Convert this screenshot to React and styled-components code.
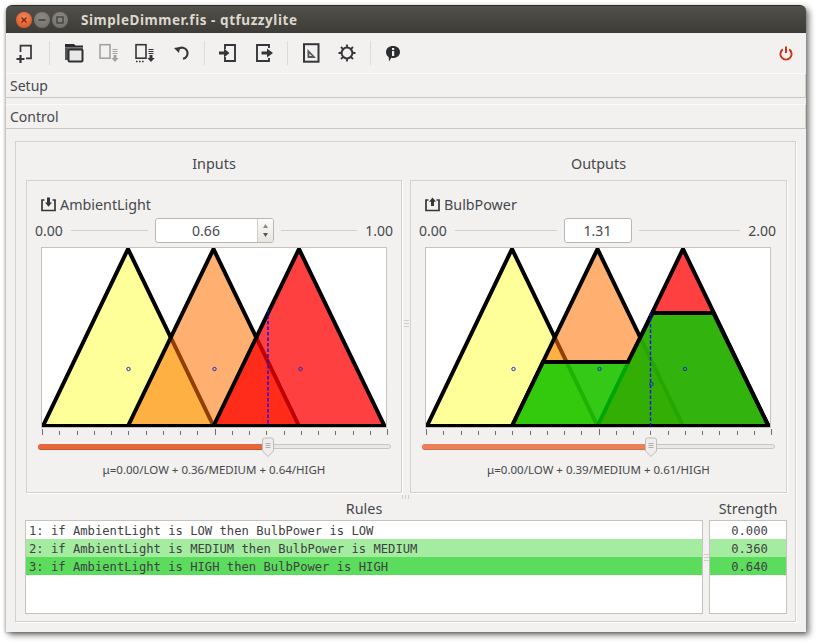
import React from 'react';
import styled, { createGlobalStyle } from 'styled-components';

const Global = createGlobalStyle`
  html, body { margin: 0; padding: 0; background: #fff; }
  #root { width: 816px; height: 643px; overflow: hidden; }
`;

const Page = styled.div`
  padding: 5px 10px 0 6px;
  font-family: "Noto Sans", sans-serif;
  font-size: 14px;
  color: #46484c;
`;

const Window = styled.div`
  width: 800px;
  height: 627px;
  box-sizing: border-box;
  background: #f2f1ef;
  border-radius: 6px 6px 0 0;
  box-shadow: 3px 3px 6px rgba(0, 0, 0, 0.55), -1px 1px 3px rgba(0, 0, 0, 0.25);
  display: flex;
  flex-direction: column;
`;

const TitleBar = styled.div`
  height: 28px;
  flex: none;
  border-radius: 6px 6px 0 0;
  background: linear-gradient(#52504a, #3c3b37);
  border-top: 1px solid #2f2e2b;
  box-sizing: border-box;
  display: flex;
  align-items: center;
  padding-left: 10px;
`;

const WinButton = styled.span`
  width: 16px;
  height: 16px;
  margin-right: 2px;
  border-radius: 50%;
  background: ${p => (p.$close ? 'radial-gradient(circle at 50% 35%, #f58a5a, #d8491f)' : 'radial-gradient(circle at 50% 35%, #8d8b83, #6c6a63)')};
  color: ${p => (p.$close ? '#6e2410' : '#3f3e3a')};
  display: flex;
  align-items: center;
  justify-content: center;
  flex: none;
`;

const TitleText = styled.span`
  margin-left: 11px;
  font-weight: 700;
  font-size: 13.5px;
  letter-spacing: 0.55px;
  color: #dcd8cd;
`;

const Toolbar = styled.div`
  height: 40px;
  flex: none;
  display: flex;
  align-items: center;
  padding: 0 2px 0 1px;
`;

const ToolButton = styled.span`
  width: 36px;
  height: 24px;
  flex: none;
  display: flex;
  justify-content: center;
`;

const ToolSep = styled.span`
  width: ${p => p.$w}px;
  height: 24px;
  flex: none;
  display: flex;
  justify-content: center;
  &::before { content: ''; width: 1px; background: #dcdbd8; }
`;

const Spacer = styled.span`flex: 1;`;

const Section = styled.div`
  height: 25px;
  flex: none;
  box-sizing: border-box;
  margin-top: ${p => p.$top}px;
  padding-left: 4px;
  border-top: 1px solid #fbfafa;
  border-bottom: 1px solid #c9c8c5;
  border-right: 1px solid #d0cfcc;
  line-height: 24px;
  font-size: 14px;
`;

const Frame = styled.div`
  margin: 12px 10px 0 9px;
  height: 481px;
  box-sizing: border-box;
  border: 1px solid #d2d1ce;
  box-shadow: 1px 1px 0 #fff;
  padding: 12px 8px 8px 10px;
  display: flex;
  flex-direction: column;
`;

const Columns = styled.div`
  display: grid;
  grid-template-columns: 376px 8px 377px;
  height: 339px;
  flex: none;
`;

const Column = styled.div`
  display: flex;
  flex-direction: column;
`;

const Heading = styled.div`
  height: ${p => p.$h}px;
  line-height: ${p => p.$h}px;
  flex: none;
  text-align: center;
  font-size: 14.4px;
`;

const GroupBox = styled.div`
  margin-top: 6px;
  height: 313px;
  box-sizing: border-box;
  border: 1px solid #d2d1ce;
  box-shadow: 1px 1px 0 #fff;
  padding: 12px ${p => p.$pr}px 0 8px;
`;

const VarHeader = styled.div`
  height: 22px;
  margin-bottom: 3px;
  padding-left: 6px;
  display: flex;
  align-items: center;
  gap: 4px;
  font-size: 14.3px;
`;

const ValueRow = styled.div`
  height: 25px;
  margin-bottom: 4px;
  display: flex;
  align-items: center;
  gap: 7px;
`;

const Bound = styled.span`
  font-size: 14px;
  width: 29px;
  flex: none;
  text-align: ${p => p.$align};
`;

const Rule = styled.span`
  flex: 1;
  height: 1px;
  background: #cfcecb;
`;

const SpinBox = styled.div`
  width: ${p => p.$w}px;
  height: 25px;
  flex: none;
  box-sizing: border-box;
  background: #fff;
  border: 1px solid #b8b7b3;
  border-radius: 3px;
  display: flex;
`;

const SpinValue = styled.span`
  flex: 1;
  text-align: center;
  line-height: 23px;
  font-size: 14px;
`;

const SpinArrows = styled.span`
  width: 15px;
  flex: none;
  border-left: 1px solid #cfcecb;
  border-radius: 0 2px 2px 0;
  background: linear-gradient(#fbfbfa, #e6e5e2);
  display: flex;
  flex-direction: column;
  align-items: center;
  justify-content: center;
  gap: 5px;
`;

const PlotFrame = styled.div`
  margin-left: 6px;
  width: 346px;
  height: 181px;
  box-sizing: border-box;
  border: 1px solid #c4c3c0;
  background: #fff;
  svg { display: block; }
`;

const SliderBox = styled.div`
  margin-left: 3px;
  width: 353px;
  height: 30px;
  position: relative;
  svg.ticks { display: block; }
`;

const Track = styled.div`
  position: absolute;
  left: 0;
  right: 0;
  top: 16px;
  height: 5px;
  box-sizing: border-box;
  border-radius: 3px;
  background: #e9e8e6;
  border: 1px solid #c6c5c2;
`;

const TrackFill = styled.div`
  position: absolute;
  left: 0;
  top: 16px;
  height: 6px;
  border-radius: 3px 0 0 3px;
  background: ${p => p.$c};
  border-bottom: 1px solid ${p => p.$b};
  box-sizing: border-box;
`;

const Thumb = styled.svg`
  position: absolute;
  top: 9px;
`;

const Mu = styled.div`
  margin-top: 2px;
  height: 20px;
  line-height: 20px;
  text-align: center;
  font-size: 11.5px;
  padding-left: ${p => p.$pad}px;
`;

const VGrip = styled.div`
  display: flex;
  align-items: center;
  justify-content: center;
  &::before {
    content: '';
    width: 5px;
    height: 7px;
    background: repeating-linear-gradient(#d0cfcc 0 1px, transparent 1px 3px);
  }
`;

const HGrip = styled.div`
  height: 7px;
  flex: none;
  display: flex;
  align-items: center;
  justify-content: center;
  padding-right: 1px;
  &::before {
    content: '';
    width: 8px;
    height: 4px;
    background: repeating-linear-gradient(90deg, #d0cfcc 0 1px, transparent 1px 3px);
  }
`;

const RulesArea = styled.div`
  display: grid;
  grid-template-columns: 678px 6px 78px;
  margin-left: -1px;
  flex: none;
`;

const ListBox = styled.div`
  margin-top: 2px;
  height: 94px;
  box-sizing: border-box;
  border: 1px solid #c4c3c0;
  background: #fff;
  overflow: hidden;
`;

const ListRow = styled.div`
  height: 18px;
  line-height: 20px;
  padding-left: 3px;
  font-family: "DejaVu Sans Mono", monospace;
  font-size: 12.18px;
  white-space: pre;
  background: ${p => p.$bg};
  text-align: ${p => (p.$center ? 'center' : 'left')};
  color: #3f4144;
`;

const Ic = ({ children }) => (
  <svg width="24" height="24" viewBox="0 0 24 24" fill="none">{children}</svg>
);

const DK = '#35363a';
const GR = '#a3a3a1';

const IconNew = () => (
  <Ic>
    <path d="M7.500 11V4.700H18V17.300H13" stroke={DK} strokeWidth="1.700" />
    <path d="M7.500 14V22M3.500 18H11.500" stroke={DK} strokeWidth="2.200" />
  </Ic>
);
const IconOpen = () => (
  <Ic>
    <path d="M4 3h9l1.500 1.500H22V7H4z" fill="#2b2b2d" />
    <path d="M4 6h18v3H4z" fill="#77777a" />
    <path d="M4 7h3v12H4z" fill="#55565a" />
    <rect x="7.500" y="8.500" width="14" height="12" rx="1" fill="#e8e8e6" stroke="#2f3033" strokeWidth="2" />
  </Ic>
);
const IconSave = ({ c, dots }) => (
  <Ic>
    <rect x="3" y="3.700" width="10" height="13.500" stroke={c} strokeWidth="1.600" />
    <path d="M15.500 8.500h5M15.500 10.500h5M15.500 12.500h5" stroke={c} strokeWidth="1" />
    <path d="M16.500 14h3v3h2.200L18 21l-3.700-4h2.200z" fill={c} />
    {dots && <path d="M3 20.500h8" stroke={c} strokeWidth="1.400" strokeDasharray="1.600 1.400" />}
  </Ic>
);
const IconUndo = () => (
  <Ic>
    <path d="M9.200 8.200A5.600 5.600 0 1 1 14 17.800" stroke={DK} strokeWidth="2.100" />
    <path d="M5 7l6-1-1 6z" fill={DK} />
  </Ic>
);
const IconImport = () => (
  <Ic>
    <path d="M10 8V4H20V20H10V16" stroke={DK} strokeWidth="1.900" />
    <path d="M4 10.500H9V7.500L14.500 12 9 16.500V13.500H4z" fill={DK} />
  </Ic>
);
const IconExport = () => (
  <Ic>
    <path d="M18 7V4H6V20H18V17" stroke={DK} strokeWidth="1.900" />
    <path d="M10.500 10.500H16V7.500L22 12 16 16.500V13.500H10.500z" fill={DK} />
  </Ic>
);
const IconRuler = () => (
  <Ic>
    <rect x="5" y="3.200" width="14.500" height="17.500" stroke={DK} strokeWidth="2" />
    <path d="M8.500 8V17H17z" fill="#55565a" />
    <path d="M10.400 12.400V15H13z" fill="#f2f1ef" />
  </Ic>
);
const IconGear = () => (
  <Ic>
    <circle cx="12" cy="12" r="5.400" stroke={DK} strokeWidth="2" />
    <path d="M12 3.500V7M12 17v3.500M3.500 12H7M17 12h3.500M6 6l2.400 2.400M15.600 15.600 18 18M18 6l-2.400 2.400M8.400 15.600 6 18" stroke={DK} strokeWidth="1.800" />
  </Ic>
);
const IconInfo = () => (
  <Ic>
    <path d="M12 5c4.200 0 7 2.600 7 6s-2.800 6-7 6c-.6 0-1.200 0-1.700-.2L8 20.500l-.3-4.400C6 15 5 13.200 5 11c0-3.400 2.800-6 7-6z" fill="#2d2e31" />
    <path d="M11 7h2.200v2H11zM11 10h2.200v5H11z" fill="#f2f1ef" />
  </Ic>
);
const IconPower = () => (
  <Ic>
    <path d="M8.800 8.400a5.600 5.600 0 1 0 6.400 0" stroke="#c8321a" strokeWidth="1.900" />
    <path d="M12 5.500V12" stroke="#c8321a" strokeWidth="2" />
  </Ic>
);
const IconTray = ({ up }) => (
  <svg width="15" height="15" viewBox="0 0 15 15" fill="none">
    <path d="M3.500 3H1v10.500h13V3h-2.500" stroke={DK} strokeWidth="1.700" />
    {up ? <path d="M7.500 .5 11 4.800H9v4.200H6V4.800H4z" fill={DK} /> : <path d="M6 .5h3v5h2L7.500 9.800 4 5.500h2z" fill={DK} />}
  </svg>
);

const WinGlyph = ({ kind }) => (
  <svg width="10" height="10" viewBox="0 0 10 10" fill="none" stroke="currentColor" strokeWidth="1.300">
    {kind === 'x' && <path d="M2.500 2.500l5 5M7.500 2.500l-5 5" />}
    {kind === 'm' && <path d="M1.500 5h7" strokeWidth="1.600" />}
    {kind === 'r' && <rect x="2" y="2" width="6" height="6" />}
  </svg>
);

const TRI = (o, a, b, c) => `${o + a},426 ${o + b},249 ${o + c},426`;

const Terms = ({ o }) => (
  <g stroke="#000" strokeWidth="4" strokeLinejoin="miter">
    <polygon points={TRI(o, 43, 128, 213.5)} fill="rgb(255,255,153)" />
    <polygon points={TRI(o, 128, 213.5, 299)} fill="rgba(255,114,0,0.56)" />
    <polygon points={TRI(o, 213.5, 299, 384.5)} fill="rgba(255,0,0,0.75)" />
  </g>
);

const Plot = ({ o, cursor, cursorTop, extra, dots }) => (
  <svg width="344" height="179" viewBox={`${o + 42} 248 344 179`}>
    <Terms o={o} />
    {extra}
    <line x1={cursor} x2={cursor} y1={cursorTop} y2="426" stroke="#0a0af0" strokeWidth="1.400" strokeDasharray="3.500 2" />
    {dots.map(([x, y]) => (
      <circle key={x} cx={x} cy={y} r="1.700" fill="none" stroke="#1c2cc4" strokeWidth="1" />
    ))}
  </svg>
);

const Ticks = () => (
  <svg className="ticks" width="353" height="8" viewBox="0 0 353 8">
    {Array.from({ length: 21 }, (_, i) => {
      const x = Math.round(4 + i * 17.25) + 0.5;
      const tall = i === 0 || i === 10 || i === 20;
      return <line key={i} x1={x} x2={x} y1={tall ? 1 : 3} y2="7" stroke="#6f6f6d" strokeWidth="1" />;
    })}
  </svg>
);

const SliderThumb = ({ x }) => (
  <Thumb width="14" height="21" viewBox="0 0 14 21" style={{ left: x - 7 }}>
    <path d="M1.500 3a2 2 0 0 1 2-2h7a2 2 0 0 1 2 2v11L7 19.500 1.500 14z" fill="#eeedeb" stroke="#bdbcb9" />
    <path d="M4.500 6.500h5M4.500 8.500h5M4.500 10.500h5" stroke="#9e9d9a" strokeWidth="0.800" />
  </Thumb>
);

const Panel = ({ title, up, name, lo, hi, value, spin, spinW, pr, muPad, o, cursor, cursorTop, dots, extra, thumb, fill, fillB, mu }) => (
  <Column>
    <Heading $h={20}>{title}</Heading>
    <GroupBox $pr={pr}>
      <VarHeader><IconTray up={up} />{name}</VarHeader>
      <ValueRow>
        <Bound $align="left">{lo}</Bound>
        <Rule />
        <SpinBox $w={spinW}>
          <SpinValue>{value}</SpinValue>
          {spin && (
            <SpinArrows>
              <svg width="7" height="4" viewBox="0 0 7 4"><path d="M3.500 0 6 4H1z" fill="#8a8986" /></svg>
              <svg width="7" height="4" viewBox="0 0 7 4"><path d="M1 0h5L3.500 4z" fill="#55554f" /></svg>
            </SpinArrows>
          )}
        </SpinBox>
        <Rule />
        <Bound $align="right">{hi}</Bound>
      </ValueRow>
      <PlotFrame>
        <Plot o={o} cursor={cursor} cursorTop={cursorTop} dots={dots} extra={extra} />
      </PlotFrame>
      <SliderBox>
        <Ticks />
        <Track />
        <TrackFill $c={fill} $b={fillB} style={{ width: thumb }} />
        <SliderThumb x={thumb} />
      </SliderBox>
      <Mu $pad={muPad}>{mu}</Mu>
    </GroupBox>
  </Column>
);

const rules = [
  { t: '1: if AmbientLight is LOW then BulbPower is LOW', s: '0.000', bg: '#ffffff' },
  { t: '2: if AmbientLight is MEDIUM then BulbPower is MEDIUM', s: '0.360', bg: '#a4eca0' },
  { t: '3: if AmbientLight is HIGH then BulbPower is HIGH', s: '0.640', bg: '#5cdc5c' },
];

const Aggregate = (
  <polygon
    points="512,426 543,362 628,362 652.500,313 713.500,313 768.500,426"
    fill="rgba(0,208,0,0.8)"
    stroke="#000"
    strokeWidth="4"
    strokeLinejoin="miter"
  />
);

export default function App() {
  return (
    <Page>
      <Global />
      <Window>
        <TitleBar>
          <WinButton $close><WinGlyph kind="x" /></WinButton>
          <WinButton><WinGlyph kind="m" /></WinButton>
          <WinButton><WinGlyph kind="r" /></WinButton>
          <TitleText>SimpleDimmer.fis - qtfuzzylite</TitleText>
        </TitleBar>
        <Toolbar>
          <ToolButton><IconNew /></ToolButton>
          <ToolSep $w={12} />
          <ToolButton><IconOpen /></ToolButton>
          <ToolButton><IconSave c={GR} /></ToolButton>
          <ToolButton><IconSave c={DK} dots /></ToolButton>
          <ToolButton><IconUndo /></ToolButton>
          <ToolSep $w={10} />
          <ToolButton><IconImport /></ToolButton>
          <ToolButton><IconExport /></ToolButton>
          <ToolSep $w={12} />
          <ToolButton><IconRuler /></ToolButton>
          <ToolButton><IconGear /></ToolButton>
          <ToolSep $w={10} />
          <ToolButton><IconInfo /></ToolButton>
          <Spacer />
          <ToolButton><IconPower /></ToolButton>
        </Toolbar>
        <Section $top={0}>Setup</Section>
        <Section $top={6}>Control</Section>
        <Frame>
          <Columns>
            <Panel
              title="Inputs" name="AmbientLight" lo="0.00" hi="1.00" value="0.66" spin spinW={119}
              pr={8} muPad={0}
              o={0} cursor={268} cursorTop={310}
              dots={[[128.500, 369], [214.500, 369], [300.500, 369]]}
              thumb={230} fill="#e8673a" fillB="#c9552c"
              mu="μ=0.00/LOW + 0.36/MEDIUM + 0.64/HIGH"
            />
            <VGrip />
            <Panel
              title="Outputs" up name="BulbPower" lo="0.00" hi="2.00" value="1.31" spinW={68}
              pr={10} muPad={2}
              o={384} cursor={650.500} cursorTop={313}
              dots={[[513.500, 369], [599.500, 369], [651.500, 384], [685, 369]]}
              extra={Aggregate}
              thumb={229} fill="#ea8058" fillB="#d8704a"
              mu="μ=0.00/LOW + 0.39/MEDIUM + 0.61/HIGH"
            />
          </Columns>
          <HGrip />
          <RulesArea>
            <Column>
              <Heading $h={18}>Rules</Heading>
              <ListBox>
                {rules.map(r => <ListRow key={r.t} $bg={r.bg}>{r.t}</ListRow>)}
              </ListBox>
            </Column>
            <VGrip />
            <Column>
              <Heading $h={18}>Strength</Heading>
              <ListBox>
                {rules.map(r => <ListRow key={r.s} $bg={r.bg} $center>{r.s}</ListRow>)}
              </ListBox>
            </Column>
          </RulesArea>
        </Frame>
      </Window>
    </Page>
  );
}
